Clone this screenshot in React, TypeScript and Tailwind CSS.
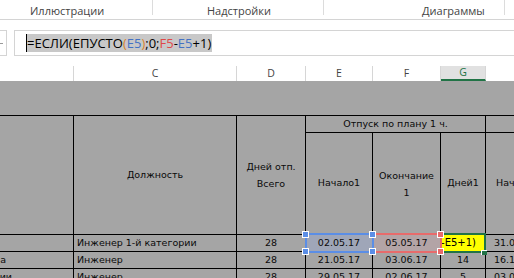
export default function App() {
  const cellFont = "font-['DejaVu_Sans',sans-serif] text-[9.5px] text-[#0a0a0a]";
  const b = "border-r border-b border-black";
  return (
    <div className="w-[514px] h-[278px] overflow-hidden bg-white">
      {/* Ribbon group labels */}
      <div className="h-[20px] border-b border-[#d4d4d4] flex items-start text-[11px] text-[#444] font-['Open_Sans',sans-serif]">
        <div className="w-[152px] pl-[30px] pt-[3px] leading-[16px] whitespace-nowrap">Иллюстрации</div>
        <div className="w-px h-[15px] bg-[#dcdcdc]" />
        <div className="w-[170px] pl-[54px] pt-[3px] leading-[16px] whitespace-nowrap">Надстройки</div>
        <div className="w-px h-[15px] bg-[#dcdcdc]" />
        <div className="w-[180px] pl-[98px] pt-[3px] leading-[16px] whitespace-nowrap">Диаграммы</div>
        <div className="w-px h-[15px] bg-[#dcdcdc]" />
      </div>

      {/* Formula bar */}
      <div className="mt-[10px] h-[26px] flex">
        <div className="w-[7px] h-full border-y border-r border-[#d4d4d4] flex items-center">
          <div className="w-[3px] h-px bg-[#9a9a9a]" />
        </div>
        <div className="w-[7px]" />
        <div className="flex-1 h-full border-y border-l border-[#d4d4d4] pl-[11px] flex items-center font-['Open_Sans',sans-serif] text-[13px] text-black">
          <span className="bg-[#c8c8c8] border-l border-black h-[18px] leading-[18px] whitespace-nowrap pr-[1px]">
            =ЕСЛИ(ЕПУСТО<span className="text-[#d9822b]">(</span>
            <span className="text-[#4472c4]">E5</span>
            <span className="text-[#d9822b]">)</span>;0;<span className="text-[#e04848]">F5</span>-<span className="text-[#4472c4]">E5</span>+1)
          </span>
        </div>
      </div>

      {/* Column headers */}
      <div className="mt-[10px] h-[15px] grid grid-cols-[74px_163px_69px_67px_68px_45px_100px] font-['Open_Sans',sans-serif] text-[10.5px] text-[#444] leading-[15px]">
        <div className="border-r border-[#d6d6d6]" />
        <div className="border-r border-[#d6d6d6] text-center">C</div>
        <div className="border-r border-[#d6d6d6] text-center">D</div>
        <div className="border-r border-[#d6d6d6] text-center">E</div>
        <div className="border-r border-[#d6d6d6] text-center">F</div>
        <div className="border-r border-[#d6d6d6] bg-[#e1e1e1] text-center text-[#217346] border-b-2 border-b-[#217346] leading-[13px]">G</div>
        <div />
      </div>

      {/* Sheet grid (dimmed) */}
      <div className={`bg-[#a5a5a5] ${cellFont}`}>
        <div className="h-[35px] border-b border-black" />
        <div className="grid grid-cols-[74px_163px_69px_67px_68px_45px_100px] grid-rows-[17px_102px]">
          <div className={`row-span-2 ${b}`} />
          <div className={`row-span-2 ${b} flex items-center justify-center`}>Должность</div>
          <div className={`row-span-2 ${b} flex items-center justify-center text-center leading-[17px]`}>
            Дней отп.<br />Всего
          </div>
          <div className={`col-span-3 ${b} flex items-center justify-center whitespace-nowrap`}>Отпуск по плану 1 ч.</div>
          <div className="border-b border-black" />
          <div className={`${b} flex items-center justify-center`}>Начало1</div>
          <div className={`${b} flex items-center justify-center text-center leading-[17px]`}>
            Окончание<br />1
          </div>
          <div className={`${b} flex items-center justify-center`}>Дней1</div>
          <div className="border-b border-black flex items-center pl-[10px] whitespace-nowrap">Начало2</div>
        </div>

        <div className="grid grid-cols-[74px_163px_69px_67px_68px_45px_100px] grid-rows-[17px_17px_17px] leading-[16px]">
          {/* row 1 */}
          <div className={b} />
          <div className={`${b} pl-[3px] flex items-center whitespace-nowrap`}>Инженер 1-й категории</div>
          <div className={`${b} flex items-center justify-center`}>28</div>
          <div className={`${b} relative bg-[#9fa6b8] flex items-center justify-center`}>
            02.05.17
            <div className="absolute z-30 left-[-1px] top-[-2px] w-[69px] h-[20px] border-2 border-[#5b8ee6]" />
            <div className="absolute z-30 left-[-4px] top-[-4px] w-[7px] h-[7px] bg-[#5b8ee6] border border-white" />
            <div className="absolute z-30 left-[63px] top-[-4px] w-[7px] h-[7px] bg-[#5b8ee6] border border-white" />
            <div className="absolute z-30 left-[-4px] top-[13px] w-[7px] h-[7px] bg-[#5b8ee6] border border-white" />
            <div className="absolute z-30 left-[63px] top-[13px] w-[7px] h-[7px] bg-[#5b8ee6] border border-white" />
          </div>
          <div className={`${b} relative bg-[#b3a4a6] flex items-center justify-center`}>
            05.05.17
            <div className="absolute z-20 left-[-1px] top-[-2px] w-[70px] h-[20px] border-2 border-[#e86b6b]" />
            <div className="absolute z-20 left-[64px] top-[-4px] w-[7px] h-[7px] bg-[#e86b6b] border border-white" />
            <div className="absolute z-20 left-[64px] top-[13px] w-[7px] h-[7px] bg-[#e86b6b] border border-white" />
          </div>
          <div className={`${b} relative bg-[#ffff00] flex items-center`}>
            <div className="w-full h-full overflow-hidden flex items-center justify-end pr-[9px] whitespace-nowrap text-black text-[10px]">5-E5+1)</div>
            <div className="absolute z-10 left-[-1px] top-[-2px] w-[46px] h-[20px] border-2 border-[#217346]" />
            <div className="absolute z-10 left-[40px] top-[15px] w-[6px] h-[5px] bg-[#217346] border-l border-t border-white" />
          </div>
          <div className="border-b border-black flex items-center pl-[8px] whitespace-nowrap">31.05.17</div>

          {/* row 2 */}
          <div className={`${b} overflow-hidden flex items-center justify-end pr-[67px] whitespace-nowrap`}>Петрова</div>
          <div className={`${b} pl-[3px] flex items-center whitespace-nowrap`}>Инженер</div>
          <div className={`${b} flex items-center justify-center`}>28</div>
          <div className={`${b} flex items-center justify-center`}>21.05.17</div>
          <div className={`${b} flex items-center justify-center`}>03.06.17</div>
          <div className={`${b} flex items-center justify-center`}>14</div>
          <div className="border-b border-black flex items-center pl-[8px] whitespace-nowrap">16.10.17</div>

          {/* row 3 */}
          <div className={`${b} overflow-hidden flex items-center justify-end pr-[61px] whitespace-nowrap`}>Кузнецов Василии</div>
          <div className={`${b} pl-[3px] flex items-center whitespace-nowrap`}>Инженер</div>
          <div className={`${b} flex items-center justify-center`}>28</div>
          <div className={`${b} flex items-center justify-center`}>29.05.17</div>
          <div className={`${b} flex items-center justify-center`}>02.06.17</div>
          <div className={`${b} flex items-center justify-center`}>5</div>
          <div className="border-b border-black flex items-center pl-[8px] whitespace-nowrap">03.09.17</div>
        </div>
      </div>
    </div>
  );
}
